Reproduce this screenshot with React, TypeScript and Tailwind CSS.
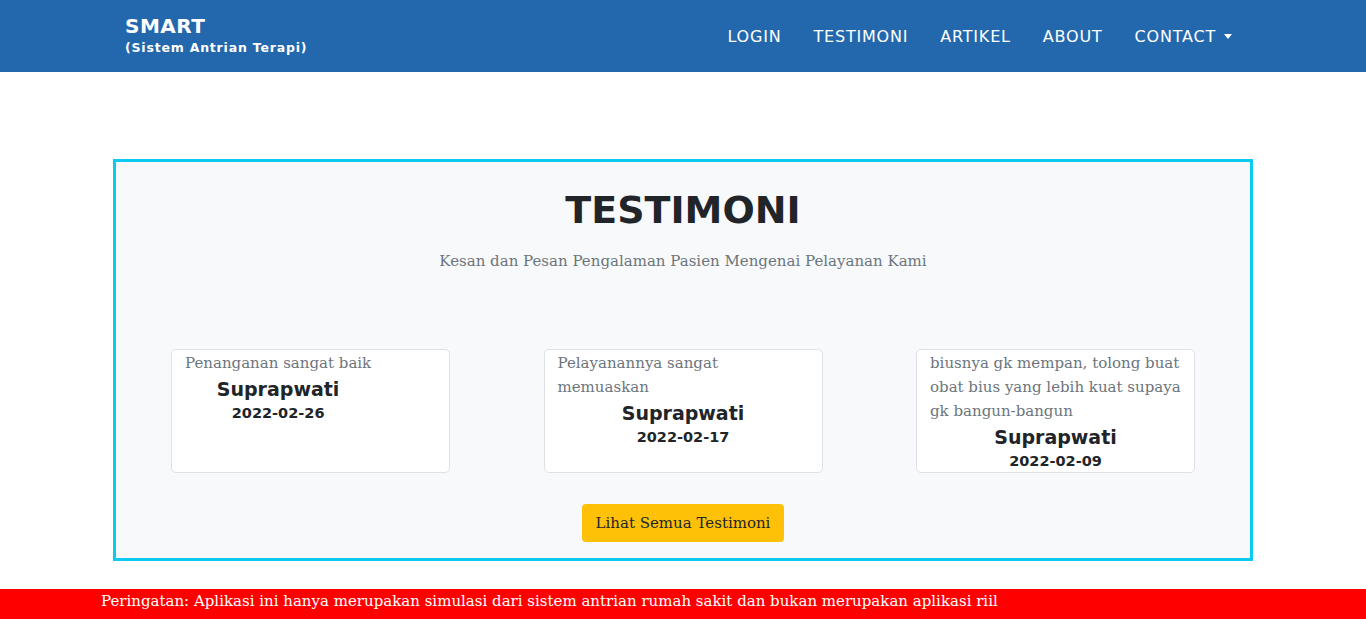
const testimonials = [
  { text: "Penanganan sangat baik", name: "Suprapwati", date: "2022-02-26" },
  { text: "Pelayanannya sangat memuaskan", name: "Suprapwati", date: "2022-02-17" },
  {
    text: "biusnya gk mempan, tolong buat obat bius yang lebih kuat supaya gk bangun-bangun",
    name: "Suprapwati",
    date: "2022-02-09",
  },
];

const heading = "font-['DejaVu_Sans',sans-serif]";
const slab = "font-['DejaVu_Serif',serif]";

function Navbar() {
  return (
    <nav className="h-[72px] bg-[#2368ad] text-white">
      <div className="max-w-[1140px] mx-auto px-3 h-full flex items-center justify-between">
        <div className={`${heading} font-bold leading-tight -mt-[2px]`}>
          <div className="text-[20px] tracking-[0.5px]">SMART</div>
          <div className="text-[12.5px] tracking-[0.8px] mt-[1px]">(Sistem Antrian Terapi)</div>
        </div>
        <ul className={`${heading} flex items-center text-[16px] tracking-[0.8px] mt-[1px] pr-[1px]`}>
          <li className="px-4">LOGIN</li>
          <li className="px-4">TESTIMONI</li>
          <li className="px-4">ARTIKEL</li>
          <li className="px-4">ABOUT</li>
          <li className="pl-4 pr-2 flex items-center">
            CONTACT
            <span className="ml-[8px] inline-block w-0 h-0 border-x-[4px] border-x-transparent border-t-[5px] border-t-white" />
          </li>
        </ul>
      </div>
    </nav>
  );
}

function Card({ t }: { t: (typeof testimonials)[number] }) {
  return (
    <div className="w-[279px] bg-white border border-[#dee2e6] rounded-[5px] px-[13px] pt-[1px] pb-[1px]">
      <div className="w-fit max-w-full">
        <p className={`${slab} text-[15px] leading-6 text-[#6c757d]`}>{t.text}</p>
        <h5 className={`${heading} text-center font-bold text-[19px] leading-6 text-[#212529] mt-[2px]`}>
          {t.name}
        </h5>
        <h6 className={`${heading} text-center font-bold text-[14.5px] leading-[19px] text-[#212529] mt-[3px]`}>
          {t.date}
        </h6>
      </div>
    </div>
  );
}

export default function App() {
  return (
    <div className="min-h-[619px] bg-white">
      <Navbar />
      <section className="max-w-[1140px] mx-auto mt-[87px] border-[3px] border-[#0dcaf0] bg-[#f8f9fa] h-[402px]">
        <h1 className={`${heading} text-center font-bold text-[38px] leading-[48px] text-[#212529] mt-[24px]`}>
          TESTIMONI
        </h1>
        <p className={`${slab} text-center text-[15px] leading-6 text-[#6c757d] mt-[15px]`}>
          Kesan dan Pesan Pengalaman Pasien Mengenai Pelayanan Kami
        </p>
        <div className="flex justify-between items-stretch px-[55px] mt-[76px]">
          {testimonials.map((t) => (
            <Card key={t.date} t={t} />
          ))}
        </div>
        <div className="flex justify-center mt-[31px]">
          <button className={`${slab} bg-[#ffc107] text-[#212529] text-[15px] leading-6 px-[14px] py-[7px] rounded-[4px]`}>
            Lihat Semua Testimoni
          </button>
        </div>
      </section>
      <div className="mt-7 h-[30px] bg-[#ff0000] text-white">
        <p className={`${slab} pl-[101px] text-[15px] leading-6`}>
          Peringatan: Aplikasi ini hanya merupakan simulasi dari sistem antrian rumah sakit dan bukan merupakan aplikasi riil
        </p>
      </div>
    </div>
  );
}
